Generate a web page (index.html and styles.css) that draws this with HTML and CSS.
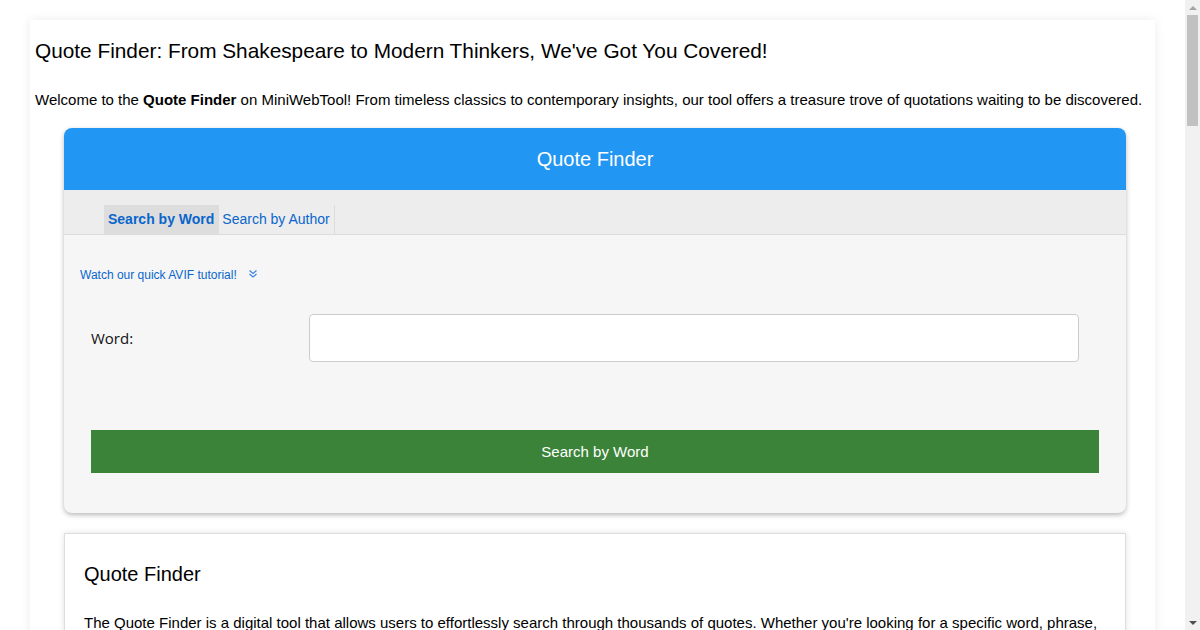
FILE: index.html
```html
<!DOCTYPE html>
<html lang="en">
<head>
<meta charset="utf-8">
<title>Quote Finder - MiniWebTool</title>
<link rel="stylesheet" href="styles.css">
</head>
<body>
<div class="viewport">
<div class="main">
<div class="page">
  <h1 class="page-title">Quote Finder: From Shakespeare to Modern Thinkers, We've Got You Covered!</h1>
  <p class="intro">Welcome to the <b>Quote Finder</b> on MiniWebTool! From timeless classics to contemporary insights, our tool offers a treasure trove of quotations waiting to be discovered.</p>

  <div class="tool-card">
    <div class="tool-head">Quote Finder</div>
    <div class="tabs">
      <a class="tab active">Search by Word</a>
      <a class="tab">Search by Author</a>
    </div>
    <div class="tool-body">
      <div class="tutorial">
        <a class="tutorial-link">Watch our quick AVIF tutorial!</a>
        <svg class="chev" width="10" height="10" viewBox="0 0 10 10" aria-hidden="true">
          <path d="M1.5 1.5 L5 4.5 L8.5 1.5" fill="none" stroke="#3b82e0" stroke-width="1.2"/>
          <path d="M1.5 5 L5 8 L8.5 5" fill="none" stroke="#3b82e0" stroke-width="1.2"/>
        </svg>
      </div>
      <div class="form-row">
        <label class="form-label" for="word">Word:</label>
        <input class="form-input" id="word" type="text">
      </div>
      <button class="submit">Search by Word</button>
    </div>
  </div>

  <div class="info-card">
    <h2 class="info-title">Quote Finder</h2>
    <p class="info-text">The Quote Finder is a digital tool that allows users to effortlessly search through thousands of quotes. Whether you're looking for a specific word, phrase, or the wisdom of a particular author, the Quote Finder brings the right words to your fingertips in seconds.</p>
    <h3 class="info-sub">How to Use the Quote Finder</h3>
    <p class="info-text">Choose whether you want to search by a word or by an author using the tabs at the top of the tool. Enter your search term in the field provided and press the search button. The results will show every matching quotation, along with the name of the person who said or wrote it.</p>
    <h3 class="info-sub">Search by Word</h3>
    <p class="info-text">Type any word, such as "love", "courage" or "time", and the Quote Finder returns quotations that contain that word. This is a great way to find inspiration for speeches, essays, social media posts, greeting cards and presentations.</p>
    <h3 class="info-sub">Search by Author</h3>
    <p class="info-text">Enter the name of an author, philosopher, scientist, leader or artist to explore their most memorable sayings. From William Shakespeare and Confucius to Maya Angelou and Albert Einstein, the collection spans centuries of human thought.</p>
  </div>
</div>
</div>
<div class="scrollbar" aria-hidden="true">
  <div class="sb-btn"><span class="sb-up"></span></div>
  <div class="sb-track"><div class="sb-thumb"></div></div>
  <div class="sb-btn"><span class="sb-down"></span></div>
</div>
</div>
</body>
</html>
```

FILE: styles.css
```css
html, body {
  margin: 0;
  padding: 0;
  background: #ffffff;
}

body {
  font-family: "Liberation Sans", Arial, sans-serif;
  color: #000;
  font-size: 15px;
}

.viewport {
  display: flex;
  align-items: flex-start;
  width: 1200px;
}

.main {
  width: 1185px;
  flex: none;
}

/* mock browser scrollbar */
.scrollbar {
  width: 15px;
  height: 630px;
  flex: none;
  background: #f1f1f1;
  display: flex;
  flex-direction: column;
}

.sb-btn {
  height: 15px;
  display: flex;
  align-items: center;
  justify-content: center;
}

.sb-up {
  width: 0;
  height: 0;
  border-left: 4px solid transparent;
  border-right: 4px solid transparent;
  border-bottom: 4px solid #a3a3a3;
}

.sb-down {
  width: 0;
  height: 0;
  border-left: 4px solid transparent;
  border-right: 4px solid transparent;
  border-top: 4px solid #505050;
}

.sb-track {
  flex: 1;
  padding: 0 2px;
}

.sb-thumb {
  height: 111px;
  background: #c1c1c1;
}

.page {
  margin: 20px 30px 40px 30px;
  padding: 1px 5px 30px 5px;
  background: #fff;
  box-shadow: 0 0 10px rgba(0, 0, 0, 0.08);
}

.page-title {
  font-size: 20.8px;
  font-weight: normal;
  margin: 18px 0 29px 0;
  line-height: 23px;
}

.intro {
  font-size: 15px;
  line-height: 17px;
  margin: 0 0 20px 0;
}

.tool-card {
  margin: 0 24px 0 29px;
  background: #f6f6f6;
  border-radius: 8px;
  box-shadow: 0 2px 5px rgba(0, 0, 0, 0.28);
  overflow: hidden;
}

.tool-head {
  background: #2196f3;
  color: #fff;
  font-size: 20px;
  text-align: center;
  height: 62px;
  line-height: 62px;
}

.tabs {
  display: flex;
  background: #ededed;
  padding: 15px 0 0 40px;
  border-bottom: 1px solid #dcdcdc;
}

.tab {
  font-size: 14px;
  color: #0a66cc;
  height: 29px;
  line-height: 29px;
  padding: 0 4px 0 3px;
  border-right: 1px solid #dcdcdc;
  cursor: pointer;
}

.tab.active {
  font-weight: bold;
  background: #dddddd;
  padding: 0 5px 0 4px;
  border-right: none;
}

.tool-body {
  padding: 33px 27px 40px 27px;
}

.tutorial {
  display: flex;
  align-items: center;
  gap: 11px;
  margin-left: -11px;
  height: 14px;
}

.tutorial-link {
  font-size: 12px;
  color: #0a66cc;
  line-height: 14px;
}

.chev {
  display: block;
  margin-top: -3px;
}

.form-row {
  display: grid;
  grid-template-columns: 218px 770px;
  align-items: center;
  margin-top: 32px;
}

.form-label {
  font-family: "Open Sans", "Liberation Sans", sans-serif;
  font-size: 15px;
  color: #111;
}

.form-input {
  box-sizing: border-box;
  height: 48px;
  width: 770px;
  border: 1px solid #cccccc;
  border-radius: 4px;
  background: #fff;
  margin: 0;
}

.submit {
  display: block;
  width: 100%;
  height: 43px;
  margin-top: 68px;
  border: none;
  background: #3b8339;
  color: #fff;
  font-family: "Liberation Sans", Arial, sans-serif;
  font-size: 15px;
  cursor: pointer;
}

.info-card {
  margin: 20px 24px 0 29px;
  background: #fff;
  border: 1px solid #dddddd;
  box-shadow: 0 0 6px rgba(0, 0, 0, 0.12);
  padding: 20px 20px 10px 19px;
}

.info-title {
  font-size: 20px;
  font-weight: normal;
  line-height: 23px;
  margin: 9px 0 25px 0;
}

.info-sub {
  font-size: 17px;
  font-weight: normal;
  margin: 26px 0 12px 0;
}

.info-text {
  font-size: 15px;
  line-height: 24px;
  margin: 0 0 16px 0;
}
```
